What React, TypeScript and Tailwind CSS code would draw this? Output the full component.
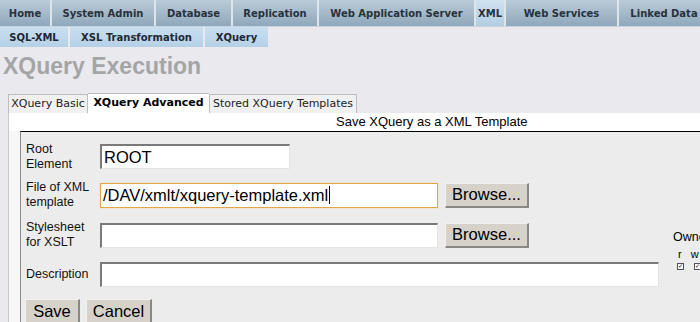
import React from 'react';

const topTabs = [
  { label: 'Home', w: 'w-[50px]' },
  { label: 'System Admin', w: 'w-[102px]' },
  { label: 'Database', w: 'w-[75px]' },
  { label: 'Replication', w: 'w-[84px]' },
  { label: 'Web Application Server', w: 'w-[155px]' },
  { label: 'XML', w: 'w-[28px]', active: true },
  { label: 'Web Services', w: 'w-[111px]' },
  { label: 'Linked Data', w: 'w-[90px]' },
];

const subTabs = [
  { label: 'SQL-XML', w: 'w-[68px]' },
  { label: 'XSL Transformation', w: 'w-[133px]' },
  { label: 'XQuery', w: 'w-[63px]' },
];

const sans = "font-['Liberation_Sans',Arial,sans-serif]";
const deja = "font-['DejaVu_Sans',sans-serif]";

function TextInput({ value, width, focused }: { value?: string; width: string; focused?: boolean }) {
  return (
    <div
      className={`${width} h-[25px] bg-white flex items-center pl-[2px] text-[16.5px] text-black ${sans} ${
        focused
          ? 'border border-[#e2a745] shadow-[0_0_1px_#f0c070]'
          : 'border-t-2 border-l-2 border-b border-r border-t-[#7a7a7a] border-l-[#7a7a7a] border-b-[#e4e4e4] border-r-[#e4e4e4]'
      }`}
    >
      {value}
      {focused && <span className="w-px h-[18px] bg-black ml-[1px]" />}
    </div>
  );
}

function Btn({ label, width }: { label: string; width: string }) {
  return (
    <div
      className={`${width} h-[25px] bg-[#d6d2ca] flex items-center justify-center text-[16.5px] text-black ${sans} border-t border-l border-t-[#f4f2ee] border-l-[#f4f2ee] border-b-2 border-r-2 border-b-[#8a8882] border-r-[#8a8882]`}
    >
      {label}
    </div>
  );
}

function Row({ label, h, children }: { label: React.ReactNode; h: string; children: React.ReactNode }) {
  return (
    <div className={`flex items-center ${h}`}>
      <div className={`w-[79px] pl-[5px] text-[12.5px] leading-[15px] text-[#111] ${sans}`}>{label}</div>
      <div className="flex items-center gap-[7px]">{children}</div>
    </div>
  );
}

export default function App() {
  return (
    <div className="w-[700px] h-[322px] overflow-hidden bg-[#e9e9ee]">
      {/* main nav */}
      <div className="flex gap-[2px] bg-[#dde4ea] h-[27px] border-b border-[#c9d3db]">
        {topTabs.map((t) => (
          <div
            key={t.label}
            className={`${t.w} shrink-0 flex items-center justify-center text-[10px] font-bold text-[#28323c] whitespace-nowrap ${deja} ${
              t.active
                ? 'bg-gradient-to-b from-[#cfe2f0] to-[#b2cde2]'
                : 'bg-gradient-to-b from-[#bacbd8] to-[#8fa8bb]'
            }`}
          >
            {t.label}
          </div>
        ))}
      </div>
      {/* sub nav */}
      <div className="flex gap-[2px] h-[20px]">
        {subTabs.map((t) => (
          <div
            key={t.label}
            className={`${t.w} shrink-0 flex items-center justify-center text-[10px] font-bold text-[#1e2832] whitespace-nowrap bg-gradient-to-b from-[#c9dff0] to-[#b5d0e6] ${deja}`}
          >
            {t.label}
          </div>
        ))}
      </div>

      <h1 className={`pl-[3px] pt-[6px] h-[46px] text-[23px] font-bold text-[#a5a5a5] leading-[26px] ${sans}`}>
        XQuery Execution
      </h1>

      {/* page tabs */}
      <div className={`flex pl-[8px] h-[20px] items-end text-[11px] ${deja}`}>
        <div className="h-[19px] w-[80px] flex items-center justify-center bg-[#f0f0f0] border border-[#bdbdbd] border-b-0 text-[#222]">
          XQuery Basic
        </div>
        <div className="h-[20px] w-[121px] flex items-center justify-center bg-white border-t border-[#bdbdbd] font-bold text-black">
          XQuery Advanced
        </div>
        <div className="h-[19px] w-[148px] flex items-center justify-center bg-[#f0f0f0] border border-[#bdbdbd] border-b-0 text-[#222]">
          Stored XQuery Templates
        </div>
      </div>

      {/* panel */}
      <div className="ml-[8px] border-l border-[#c8c8c8] bg-[#f7f7f7] pl-[11px]">
        <div className={`h-[18px] bg-white -ml-[11px] pl-[327px] text-[13px] leading-[18px] text-black ${sans}`}>
          Save XQuery as a XML Template
        </div>
        <div className="border-t border-l border-t-black border-l-[#8a8a8a] bg-[#ececec] flex pt-[6px]">
          <div className="w-[652px] shrink-0">
            <Row h="h-[37px]" label={<>Root<br />Element</>}>
              <TextInput value="ROOT" width="w-[190px]" />
            </Row>
            <Row h="h-[40px]" label={<>File of XML<br />template</>}>
              <TextInput value="/DAV/xmlt/xquery-template.xml" width="w-[338px]" focused />
              <Btn label="Browse..." width="w-[84px]" />
            </Row>
            <Row h="h-[40px]" label={<>Stylesheet<br />for XSLT</>}>
              <TextInput width="w-[338px]" />
              <Btn label="Browse..." width="w-[84px]" />
            </Row>
            <Row h="h-[39px]" label="Description">
              <TextInput width="w-[559px]" />
            </Row>
            <div className="flex gap-[6px] pl-[4px] pt-[5px]">
              <Btn label="Save" width="w-[55px]" />
              <Btn label="Cancel" width="w-[66px]" />
            </div>
          </div>
          <div className={`pt-[92px] ${sans} text-black`}>
            <div className="text-[12.5px] leading-[15px]">Owner</div>
            <div className="flex gap-[9px] pl-[5px] pt-[2px] text-[11px] leading-[14px]">
              <span>r</span>
              <span>w</span>
            </div>
            <div className="flex gap-[10px] pl-[4px] pt-[2px]">
              <span className="w-[7px] h-[7px] border border-[#555] bg-white text-[6px] leading-[5px] flex items-center justify-center">✓</span>
              <span className="w-[7px] h-[7px] border border-[#555] bg-white text-[6px] leading-[5px] flex items-center justify-center">✓</span>
            </div>
          </div>
        </div>
      </div>
    </div>
  );
}
